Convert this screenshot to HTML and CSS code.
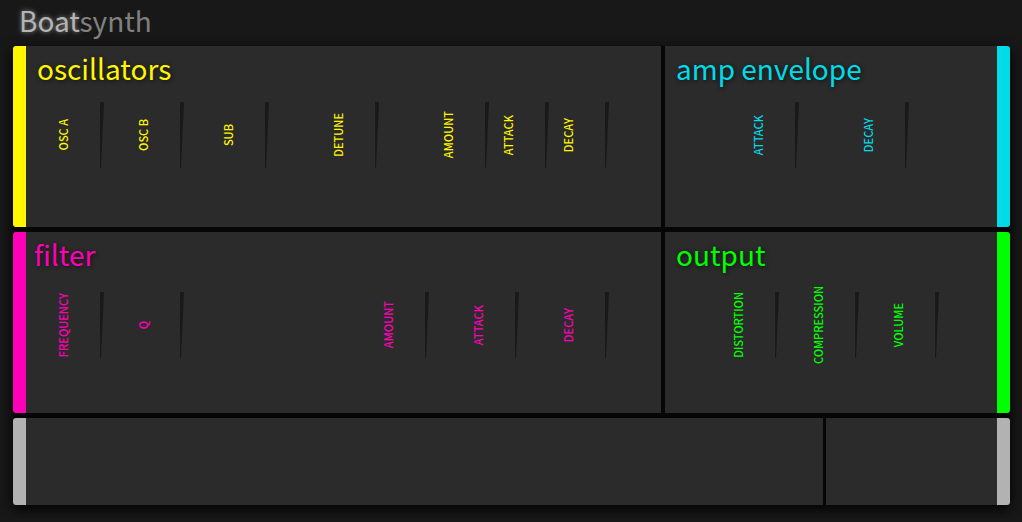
FILE: index.html
```html
<!DOCTYPE html>
<html lang="en">
<head>
<meta charset="utf-8">
<title>Boatsynth</title>
<link rel="stylesheet" href="styles.css">
</head>
<body>
<header class="masthead">
  <h1 class="brand"><span class="brand-strong">Boat</span>synth</h1>
</header>
<main class="synth">
  <div class="row">
    <section class="panel panel-main edge-left osc">
      <h2 class="title">oscillators</h2>
      <div class="controls">
        <div class="control w78"><label for="osc-a">OSC A</label><input id="osc-a" type="range"></div>
        <div class="control w80"><label for="osc-b">OSC B</label><input id="osc-b" type="range"></div>
        <div class="control w85"><label for="osc-sub">SUB</label><input id="osc-sub" type="range"></div>
        <div class="control w110"><label for="osc-detune">DETUNE</label><input id="osc-detune" type="range"></div>
        <div class="control w110"><label for="osc-amount">AMOUNT</label><input id="osc-amount" type="range"></div>
        <div class="control w60"><label for="osc-attack">ATTACK</label><input id="osc-attack" type="range"></div>
        <div class="control w60"><label for="osc-decay">DECAY</label><input id="osc-decay" type="range"></div>
      </div>
    </section>
    <section class="panel panel-side edge-right amp">
      <h2 class="title">amp envelope</h2>
      <div class="controls">
        <div class="control w134"><label for="amp-attack">ATTACK</label><input id="amp-attack" type="range"></div>
        <div class="control w110"><label for="amp-decay">DECAY</label><input id="amp-decay" type="range"></div>
      </div>
    </section>
  </div>
  <div class="row row-lower">
    <section class="panel panel-main edge-left filter">
      <h2 class="title">filter</h2>
      <div class="controls">
        <div class="control w78"><label for="filter-freq">FREQUENCY</label><input id="filter-freq" type="range"></div>
        <div class="control w80"><label for="filter-q">Q</label><input id="filter-q" type="range"></div>
        <div class="control w245"><label for="filter-amount">AMOUNT</label><input id="filter-amount" type="range"></div>
        <div class="control w90"><label for="filter-attack">ATTACK</label><input id="filter-attack" type="range"></div>
        <div class="control w90"><label for="filter-decay">DECAY</label><input id="filter-decay" type="range"></div>
      </div>
    </section>
    <section class="panel panel-side edge-right output">
      <h2 class="title">output</h2>
      <div class="controls">
        <div class="control w114"><label for="out-dist">DISTORTION</label><input id="out-dist" type="range"></div>
        <div class="control w80"><label for="out-comp">COMPRESSION</label><input id="out-comp" type="range"></div>
        <div class="control w80"><label for="out-vol">VOLUME</label><input id="out-vol" type="range"></div>
      </div>
    </section>
  </div>
  <div class="row row-keys">
    <section class="panel panel-keys edge-left keys"></section>
    <section class="panel panel-extra edge-right keys"></section>
  </div>
</main>
</body>
</html>
```

FILE: styles.css
```css
* { box-sizing: border-box; }

body {
  margin: 0;
  background: #181818;
  font-family: "Noto Sans CJK SC", "Noto Sans", sans-serif;
}

.masthead {
  height: 46px;
  padding: 0 19px;
}

.brand {
  margin: 0;
  font-size: 28px;
  line-height: 40px;
  font-weight: 400;
  color: #808080;
}

.brand-strong {
  color: #b4b4b4;
  text-shadow: 0 0 5px #888;
}

.synth {
  display: flex;
  flex-direction: column;
  gap: 5px;
  margin: 0 12px 13px 13px;
  border-radius: 4px;
  background: #060606;
  box-shadow: 0 4px 14px #000;
}

.row {
  display: flex;
  gap: 4px;
  min-height: 181px;
}

.row-keys {
  gap: 3px;
  min-height: 87px;
}

.panel {
  background: #2b2b2b;
}

.panel-main { flex: 635 1 0; }
.panel-side { flex: 332 1 0; }
.panel-keys { flex: 797 1 0; }
.panel-extra { flex: 171 1 0; }

.edge-left {
  border-left: 13px solid;
  border-radius: 3px 0 0 3px;
}

.edge-right {
  border-right: 13px solid;
  border-radius: 0 3px 3px 0;
}

.osc { color: #fff600; }
.amp { color: #00dbe8; }
.filter { color: #ff00b8; }
.output { color: #00ff00; }
.keys { color: #b2b2b2; }

.title {
  margin: 0;
  padding-left: 11px;
  font-size: 28px;
  line-height: 44px;
  font-weight: 400;
  text-shadow: 1px 1px 4px #111;
}

.filter .title { padding-left: 8px; }

.controls {
  display: flex;
  height: 66px;
  margin-top: 12px;
}

.row-lower .controls { margin-top: 16px; }

.control {
  display: flex;
  align-items: center;
  justify-content: flex-end;
  gap: 29px;
}

.control label {
  writing-mode: vertical-rl;
  transform: rotate(180deg);
  font-size: 11px;
  line-height: 16px;
  font-weight: 500;
  white-space: nowrap;
}

.control input {
  appearance: none;
  flex: none;
  width: 4px;
  height: 66px;
  margin: 0;
  background: #191919;
  clip-path: polygon(0 0, 100% 0, 25% 100%, 0 100%);
}

.control input::-webkit-slider-thumb {
  appearance: none;
  width: 0;
  height: 0;
}

.w60 { width: 60px; }
.w78 { width: 78px; }
.w80 { width: 80px; }
.w85 { width: 85px; }
.w90 { width: 90px; }
.w110 { width: 110px; }
.w114 { width: 114px; }
.w134 { width: 134px; }
.w245 { width: 245px; }
```
